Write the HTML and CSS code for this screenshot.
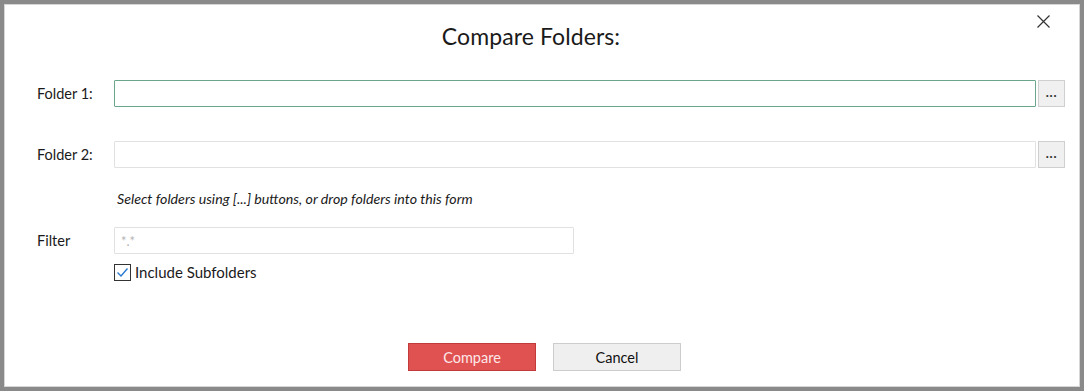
FILE: index.html
```html
<!DOCTYPE html>
<html lang="en">
  <head>
    <meta charset="utf-8" />
    <title>Compare Folders</title>
    <link rel="stylesheet" href="styles.css">
  </head>
  <body>
    <div class="dialog">
      <div class="head">
        <span></span>
        <h1 class="title">Compare Folders:</h1>
        <button class="close" title="Close">
          <svg width="13" height="13" viewBox="0 0 13 13">
            <path d="M0.5 0.5 L12.5 12.5 M12.5 0.5 L0.5 12.5" stroke="#333" stroke-width="1.2" fill="none"/>
          </svg>
        </button>
      </div>

      <div class="row first">
        <label class="label">Folder 1:</label>
        <input class="field focus" type="text" />
        <button class="browse">...</button>
      </div>
      <div class="row second">
        <label class="label">Folder 2:</label>
        <input class="field" type="text" />
        <button class="browse">...</button>
      </div>

      <p class="hint">Select folders using [...] buttons, or drop folders into this form</p>

      <div class="row filter">
        <label class="label">Filter</label>
        <input class="field short" type="text" placeholder="*.*" />
      </div>

      <div class="check-row">
        <span class="box">
          <svg width="15" height="15" viewBox="0 0 15 15">
            <path d="M2.5 7.5 L6 11 L12.5 3.5" stroke="#2a7ad0" stroke-width="1.4" fill="none"/>
          </svg>
        </span>
        <span class="check-text">Include Subfolders</span>
      </div>

      <div class="actions">
        <button class="btn primary">Compare</button>
        <button class="btn">Cancel</button>
      </div>
    </div>
  </body>
</html>
```

FILE: styles.css
```css
* {box-sizing: border-box}
html, body {margin: 0; height: 100%}
body {
  background: #8a8a8a;
  padding: 4px 4px 4px 4px;
  font-family: Lato, "Open Sans", sans-serif;
  color: #1a1a1a;
}
.dialog {
  background: #fff;
  border: 1px solid #d6d6d6;
  height: 383px;
  padding: 0 14px 0 32px;
}
.head {
  display: grid;
  grid-template-columns: 1fr auto 1fr;
  align-items: center;
  height: 65px;
  margin: 0 -14px 0 -32px;
  padding-bottom: 4px;
}
.title {
  margin: 0;
  padding-right: 22px;
  font-weight: normal;
  font-size: 23px;
  letter-spacing: 0.1px;
}
.close {
  justify-self: end;
  align-self: start;
  margin: 10px 29px 0 0;
  padding: 0;
  border: 0;
  background: none;
  width: 13px;
  height: 13px;
}
.row {
  display: grid;
  grid-template-columns: 77px 1fr 29px;
  align-items: center;
}
.row.first {margin-top: 10px}
.row.second {margin-top: 34px}
.row.filter {
  grid-template-columns: 77px 460px;
  margin-top: 19px;
}
.label {font-size: 14.5px}
.field {
  height: 27px;
  border: 1px solid #e1e1e1;
  border-radius: 1px;
  font: 14px Lato, sans-serif;
  padding: 0 6px;
  outline: none;
}
.field.focus {border-color: #6aa68a}
.field.short::placeholder {color: #b5b5b5; font-size: 13px}
.browse {
  justify-self: end;
  width: 27px;
  height: 27px;
  background: #f0f0f0;
  border: 1px solid #cfcfcf;
  padding: 0 0 4px;
  font: bold 13px Lato, sans-serif;
  color: #333;
  letter-spacing: 0.8px;
}
.hint {
  margin: 22px 0 0 80px;
  font-style: italic;
  font-size: 14.2px;
  line-height: 18px;
}
.check-row {
  display: flex;
  align-items: center;
  gap: 4px;
  margin: 9px 0 0 77px;
  height: 18px;
}
.box {
  width: 17px;
  height: 17px;
  border: 1px solid #333;
  display: flex;
  align-items: center;
  justify-content: center;
}
.check-text {font-size: 15px}
.actions {
  display: flex;
  justify-content: center;
  gap: 17px;
  margin: 62px 0 0 -13px;
}
.btn {
  width: 128px;
  height: 28px;
  background: #efefef;
  border: 1px solid #cdcdcd;
  font: 14.5px Lato, sans-serif;
  color: #111;
}
.btn.primary {
  background: #e05252;
  border-color: #c23a3a;
  color: #fde8e8;
}
```
